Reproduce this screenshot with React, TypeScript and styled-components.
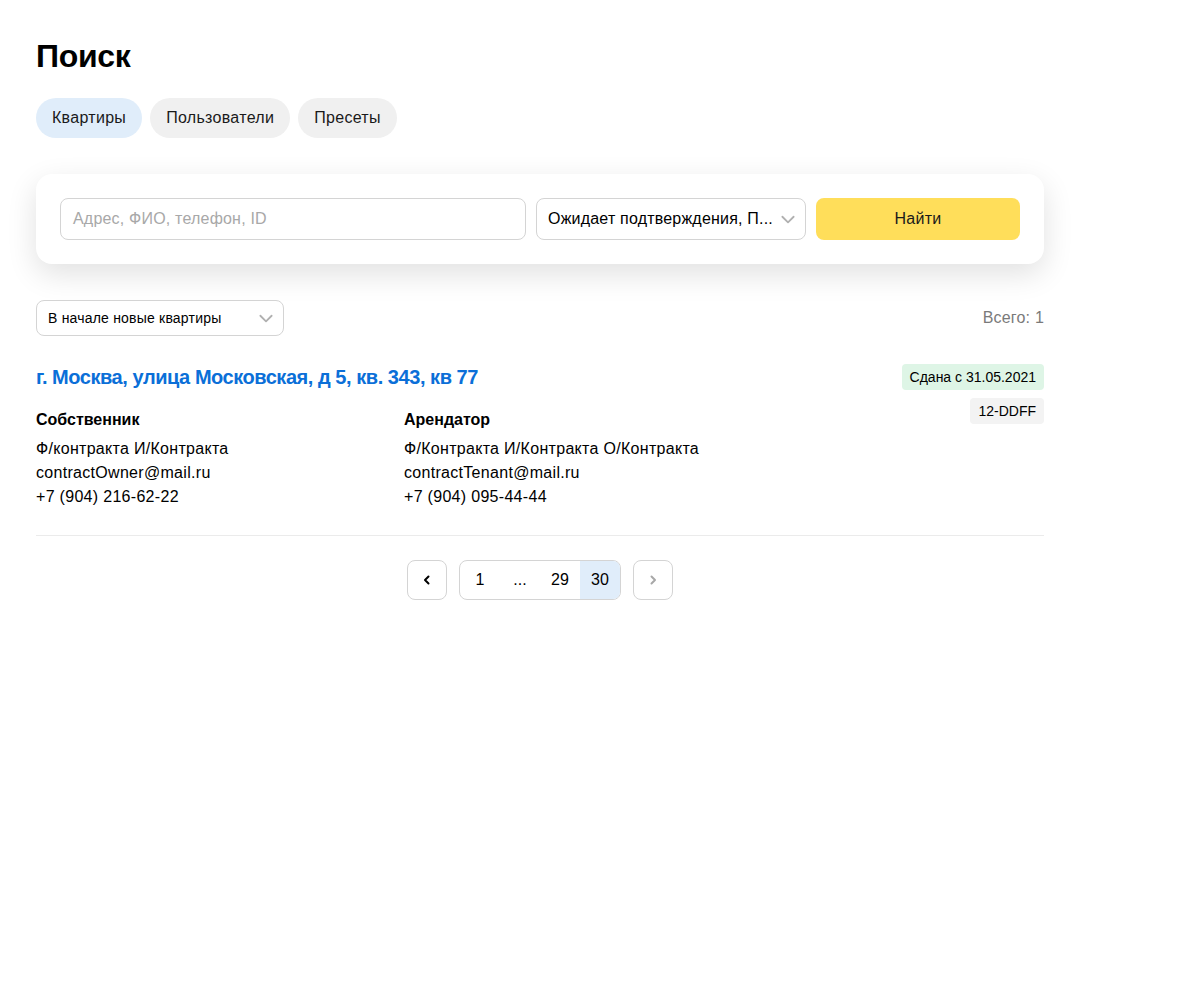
import React from "react";
import styled, { createGlobalStyle } from "styled-components";

const Global = createGlobalStyle`
  html, body { margin: 0; padding: 0; background: #fff; }
  body { font-family: "Liberation Sans", Arial, sans-serif; color: #000; }
  * { box-sizing: border-box; }
`;

const Page = styled.div`
  width: 1080px;
  padding: 36px 36px 40px;
`;

const Title = styled.h1`
  margin: 0 0 22px;
  font-size: 32px;
  line-height: 40px;
  font-weight: 700;
  letter-spacing: -0.3px;
`;

const Tabs = styled.div`
  display: flex;
  gap: 8px;
  margin-bottom: 36px;
`;

const Tab = styled.button<{ $active?: boolean }>`
  height: 40px;
  padding: 0 16px;
  border: none;
  border-radius: 20px;
  font: inherit;
  font-size: 16px;
  letter-spacing: 0.3px;
  color: #1a1a1a;
  background: ${(p) => (p.$active ? "#e0edfa" : "#f0f0f0")};
`;

const Card = styled.div`
  display: flex;
  gap: 10px;
  padding: 24px;
  border-radius: 16px;
  background: #fff;
  box-shadow: 0 10px 30px rgba(0, 0, 0, 0.12);
  margin-bottom: 36px;
`;

const Input = styled.div`
  flex: 0 0 466px;
  height: 42px;
  border: 1px solid #d4d4d4;
  border-radius: 8px;
  display: flex;
  align-items: center;
  padding: 0 12px;
  font-size: 16px;
  letter-spacing: 0.2px;
  color: #a8a8a8;
`;

const Select = styled.div<{ $w: number; $h: number; $fs: number }>`
  flex: 0 0 ${(p) => p.$w}px;
  width: ${(p) => p.$w}px;
  height: ${(p) => p.$h}px;
  border: 1px solid #d4d4d4;
  border-radius: 8px;
  display: flex;
  align-items: center;
  justify-content: space-between;
  padding: 0 8px 0 11px;
  font-size: ${(p) => p.$fs}px;
  letter-spacing: 0.2px;
  color: #000;
  white-space: nowrap;
`;

const Button = styled.button`
  flex: 0 0 204px;
  height: 42px;
  border: none;
  border-radius: 8px;
  background: #ffde5a;
  font: inherit;
  font-size: 16px;
  letter-spacing: 0.3px;
  color: #1a1a1a;
`;

const Chevron = ({ size = 16 }: { size?: number }) => (
  <svg width={size} height={size} viewBox="0 0 16 16" fill="none">
    <path d="M3 6l5 5 5-5" stroke="#b0b0b0" strokeWidth="1.6" strokeLinecap="round" strokeLinejoin="round" />
  </svg>
);

const SortRow = styled.div`
  display: flex;
  justify-content: space-between;
  align-items: center;
  margin-bottom: 28px;
`;

const Total = styled.div`
  font-size: 16px;
  letter-spacing: 0.2px;
  color: #7a7a7a;
`;

const Item = styled.div`
  display: flex;
  justify-content: space-between;
  padding-bottom: 26px;
  border-bottom: 1px solid #ebebeb;
`;

const Info = styled.div`
  display: flex;
  flex-direction: column;
`;

const Address = styled.a`
  font-size: 20px;
  line-height: 26px;
  font-weight: 700;
  letter-spacing: -0.45px;
  color: #0b6fd8;
  text-decoration: none;
  margin-bottom: 18px;
`;

const People = styled.div`
  display: grid;
  grid-template-columns: 368px 368px;
`;

const Person = styled.div`
  display: flex;
  flex-direction: column;
  font-size: 16px;
  line-height: 24px;
  letter-spacing: 0.3px;
`;

const Role = styled.div`
  font-weight: 700;
  letter-spacing: 0;
  margin-bottom: 5px;
`;

const Badges = styled.div`
  display: flex;
  flex-direction: column;
  align-items: flex-end;
  gap: 8px;
`;

const Badge = styled.span<{ $green?: boolean }>`
  height: 26px;
  padding: 0 8px;
  border-radius: 4px;
  font-size: 14px;
  line-height: 26px;
  background: ${(p) => (p.$green ? "#def5e6" : "#f3f3f3")};
`;

const Pager = styled.div`
  display: flex;
  justify-content: center;
  gap: 12px;
  margin-top: 24px;
`;

const NavBtn = styled.div`
  width: 40px;
  height: 40px;
  border: 1px solid #d4d4d4;
  border-radius: 8px;
  display: flex;
  align-items: center;
  justify-content: center;
`;

const Pages = styled.div`
  display: flex;
  border: 1px solid #d4d4d4;
  border-radius: 8px;
  overflow: hidden;
  height: 40px;
`;

const PageItem = styled.div<{ $active?: boolean }>`
  width: 40px;
  margin: -1px 0;
  display: flex;
  align-items: center;
  justify-content: center;
  font-size: 16px;
  background: ${(p) => (p.$active ? "#e0edfa" : "transparent")};
`;

const Arrow = ({ dir, color }: { dir: "l" | "r"; color: string }) => (
  <svg width="12" height="12" viewBox="0 0 12 12" fill="none">
    <path
      d={dir === "l" ? "M7.5 2.5L4 6l3.5 3.5" : "M4.5 2.5L8 6l-3.5 3.5"}
      stroke={color}
      strokeWidth="2"
      strokeLinecap="round"
      strokeLinejoin="round"
    />
  </svg>
);

export default function App() {
  return (
    <>
      <Global />
      <Page>
        <Title>Поиск</Title>
        <Tabs>
          <Tab $active>Квартиры</Tab>
          <Tab>Пользователи</Tab>
          <Tab>Пресеты</Tab>
        </Tabs>
        <Card>
          <Input>Адрес, ФИО, телефон, ID</Input>
          <Select $w={270} $h={42} $fs={16}>
            <span>Ожидает подтверждения, П...</span>
            <Chevron size={18} />
          </Select>
          <Button>Найти</Button>
        </Card>
        <SortRow>
          <Select $w={248} $h={36} $fs={14}>
            <span>В начале новые квартиры</span>
            <Chevron size={18} />
          </Select>
          <Total>Всего: 1</Total>
        </SortRow>
        <Item>
          <Info>
            <Address href="#">г. Москва, улица Московская, д 5, кв. 343, кв 77</Address>
            <People>
              <Person>
                <Role>Собственник</Role>
                <span>Ф/контракта И/Контракта</span>
                <span>contractOwner@mail.ru</span>
                <span>+7 (904) 216-62-22</span>
              </Person>
              <Person>
                <Role>Арендатор</Role>
                <span>Ф/Контракта И/Контракта О/Контракта</span>
                <span>contractTenant@mail.ru</span>
                <span>+7 (904) 095-44-44</span>
              </Person>
            </People>
          </Info>
          <Badges>
            <Badge $green>Сдана с 31.05.2021</Badge>
            <Badge>12-DDFF</Badge>
          </Badges>
        </Item>
        <Pager>
          <NavBtn><Arrow dir="l" color="#000" /></NavBtn>
          <Pages>
            <PageItem>1</PageItem>
            <PageItem>...</PageItem>
            <PageItem>29</PageItem>
            <PageItem $active>30</PageItem>
          </Pages>
          <NavBtn><Arrow dir="r" color="#a8a8a8" /></NavBtn>
        </Pager>
      </Page>
    </>
  );
}
